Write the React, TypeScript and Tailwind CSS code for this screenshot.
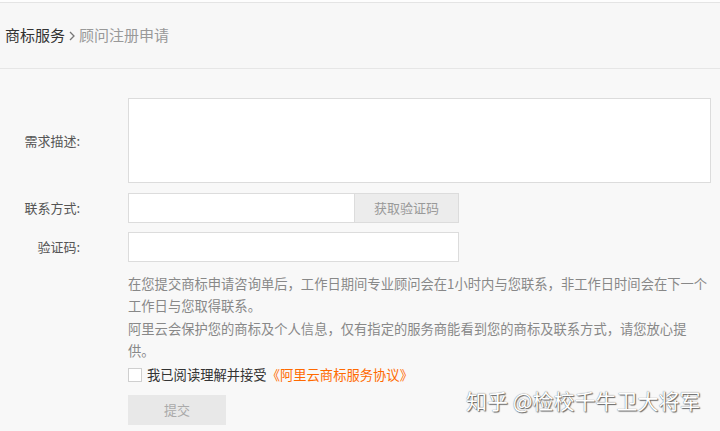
const font = { fontFamily: '"Microsoft YaHei", "Noto Sans CJK SC", "Noto Sans", sans-serif' };

const Field = ({ label, children }: { label: string; children: React.ReactNode }) => (
  <div className="flex items-center">
    <label className="w-[82px] shrink-0 text-right text-[13px] text-[#555] pr-[2px]">{label}</label>
    <div className="ml-[46px]">{children}</div>
  </div>
);

const App = () => {
  return (
    <div className="relative w-[720px] h-[431px] overflow-hidden bg-[#f8f8f8]" style={font}>
      <div className="h-[3px] bg-[#fdfdfd] border-b border-[#e4e4e4]" />
      <header className="h-[66px] flex items-center px-[5px] border-b border-[#e6e6e6] bg-[#f7f7f7]">
        <span className="text-[15px] text-[#333]">商标服务</span>
        <svg width="10" height="12" viewBox="0 0 10 12" className="mx-[2px]">
          <path d="M3 2 L7 6 L3 10" fill="none" stroke="#777" strokeWidth="1.3" />
        </svg>
        <span className="text-[15px] text-[#999]">顾问注册申请</span>
      </header>

      <main className="pt-[29px] flex flex-col">
        <Field label="需求描述:">
          <textarea className="block w-[583px] h-[85px] bg-white border border-[#dcdcdc] resize-none outline-none" />
        </Field>

        <div className="mt-[10px]">
          <Field label="联系方式:">
            <div className="flex h-[30px]">
              <input className="w-[227px] h-full bg-white border border-[#dcdcdc] outline-none" />
              <button className="w-[104px] h-full bg-[#ececec] border border-l-0 border-[#dcdcdc] text-[13px] text-[#999]">
                获取验证码
              </button>
            </div>
          </Field>
        </div>

        <div className="mt-[9px]">
          <Field label="验证码:">
            <input className="block w-[331px] h-[30px] bg-white border border-[#dcdcdc] outline-none" />
          </Field>
        </div>

        <div className="ml-[128px] mt-[11px] w-[583px] whitespace-nowrap text-[13.3px] leading-[22.3px] text-[#888]">
          <p>
            在您提交商标申请咨询单后，工作日期间专业顾问会在1小时内与您联系，非工作日时间会在下一个
            <br />
            工作日与您取得联系。
          </p>
          <p>
            阿里云会保护您的商标及个人信息，仅有指定的服务商能看到您的商标及联系方式，请您放心提
            <br />
            供。
          </p>
        </div>

        <div className="ml-[128px] mt-[2px] flex items-center h-[22px]">
          <span className="w-[14px] h-[14px] bg-white border border-[#cfcfcf]" />
          <span className="ml-[5px] text-[13.3px] text-[#333]">我已阅读理解并接受</span>
          <span className="text-[13.3px] text-[#ff6a00]">《阿里云商标服务协议》</span>
        </div>

        <button className="ml-[128px] mt-[9px] w-[98px] h-[30px] bg-[#e8e8e8] text-[13px] text-[#aaa]">
          提交
        </button>
      </main>

      <div
        className="absolute left-[466px] top-[385px] text-[21px] text-white whitespace-nowrap"
        style={{ textShadow: "0 0 1px #555, 1px 1px 1px #666" }}
      >
        知乎 @检校千牛卫大将军
      </div>
    </div>
  );
};

export default App;
